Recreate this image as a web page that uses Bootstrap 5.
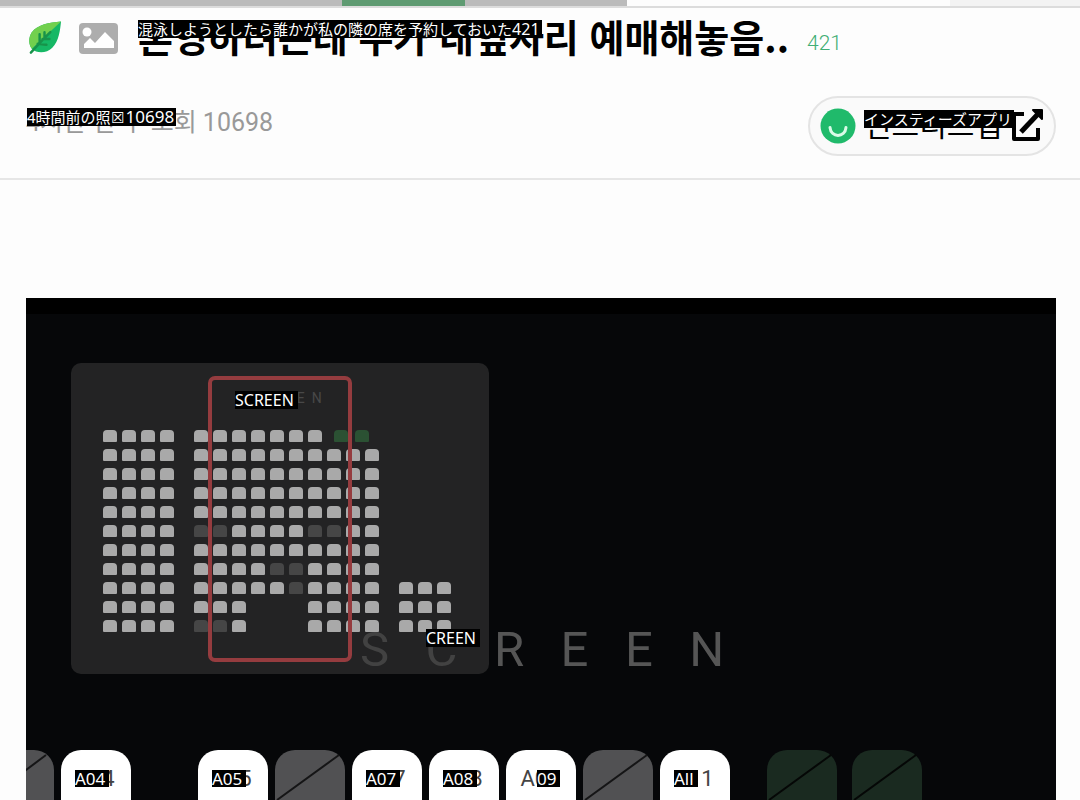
<!DOCTYPE html>
<html lang="ko">
<head>
<meta charset="utf-8">
<meta name="viewport" content="width=device-width, initial-scale=1">
<title>혼영하려는데 누가 내옆자리 예매해놓음..</title>
<link href="https://cdn.jsdelivr.net/npm/bootstrap@5.3.0/dist/css/bootstrap.min.css" rel="stylesheet">
<style>
  body { font-family: Roboto, "Noto Sans CJK KR", sans-serif; background: #fdfdfd; color: #000; }
  .page-x { padding-left: 26px; padding-right: 24px; }
  /* tab strip cut off by the top edge */
  .strip { height: 8px; border-bottom: 2px solid #dcdcdc; }
  .strip-grey { background: #bbb; }
  .strip-green { background: #5f9b72; }
  .strip-pale { background: #f3f3f3; }
  /* post heading */
  .post-head { border-bottom: 2px solid #e6e6e6; padding-bottom: 22px; }
  .title-row { height: 60px; margin-bottom: 28px; }
  .title-box { margin-left: 20px; }
  .post-title { font: bold 38px/44px "Noto Sans CJK KR", sans-serif; padding-bottom: 4px; }
  .reply-count { color: #3fae74; font-size: 21px; font-weight: 300; line-height: 28px; margin-left: 18px; padding-top: 10px; }
  .post-meta { color: #999; font-size: 25px; line-height: 32px; padding-bottom: 6px; }
  .app-btn { height: 60px; width: 248px; border: 2px solid #e4e4e4; background: #fafafa; padding: 0 10px; color: #000; }
  .app-btn:hover { background: #f2f2f2; }
  .app-name { font-size: 30px; line-height: 36px; margin-left: 8px; }
  /* translated captions laid over the original words */
  .caption { position: absolute; left: 0; background: #000; color: #fff; white-space: nowrap;
    font: 400 15px/18px "Noto Sans", "Noto Sans CJK JP", sans-serif; padding-right: 2px; }
  .caption-latin { font-size: 16px; padding-right: 4px; }
  .caption-title { top: 6px; }
  .caption-meta { top: 1px; left: 1px; }
  .caption-app { top: 2px; }
  .caption-num { font-size: 17px; }
  .caption-title .caption-num { font-size: 16px; }
  .caption-meta .caption-num { padding-left: 2px; }
  /* photo */
  .photo { background: #060709; border-top: 16px solid #000; margin-top: 118px; }
  .stage-word { position: absolute; left: 334px; top: 306px; margin: 0; font-size: 49px; line-height: 60px; font-weight: 400; color: #555; white-space: pre; }
  .mini-map { width: 418px; margin: 49px 0 0 45px; padding: 67px 32px 42px; border-radius: 10px; background: rgba(54,54,54,.61); }
  .mini-word { position: absolute; left: 164px; top: 24px; font-size: 14px; line-height: 22px; color: #484848; white-space: pre; }
  .caption-mini { left: 164px; top: 28px; }
  .caption-stage { left: 355px; top: 266px; }
  .viewport-frame { position: absolute; left: 137px; top: 13px; width: 144px; height: 286px; border: 4px solid #953c3f; border-radius: 7px; }
  .block { display: grid; gap: 7px 5px; grid-auto-rows: 12px; }
  .block-4 { grid-template-columns: repeat(4, 14px); }
  .block-10 { grid-template-columns: repeat(10, 14px); }
  .block-3 { grid-template-columns: repeat(3, 14px); }
  .block-gap { gap: 20px; }
  .dot { width: 14px; height: 12px; border-radius: 4px 4px 1px 1px; }
  .dot-free { background: #a9a9a9; }
  .dot-sold { background: #464646; }
  .dot-green { background: #2b5133; }
  .green-pair { grid-column: span 3; gap: 7px; padding-left: 7px; }
  .seat-row { margin-top: 76px; gap: 7px; height: 50px; }
  .seat { width: 70px; flex: none; height: 70px; border-radius: 20px; background: #fff; color: #444; font-size: 22px; line-height: 58px; padding-right: 2px; }
  .seat-sold { background: #515153; }
  .seat-green { background: #1a2a20; }
  .seat-cut { margin-left: -42px; }
  .aisle { margin-left: 60px; }
  .aisle-sm { margin-left: 30px; }
  .aisle-xs { margin-left: 8px; }
  .seat .caption { top: 20px; left: 14px; padding-right: 4px; font-size: 17px; line-height: 17px; }
  .seat .caption-mid { left: 31px; }
</style>
</head>
<body class="d-flex flex-column min-vh-100">
<div class="strip d-flex" aria-hidden="true">
  <div class="strip-grey" style="width:31.7%"></div>
  <div class="strip-green" style="width:11.4%"></div>
  <div class="strip-grey" style="width:15%"></div>
  <div class="strip-pale ms-auto" style="width:12%"></div>
</div>

<header class="post-head page-x">
  <div class="title-row d-flex align-items-center">
    <svg width="37" height="38" viewBox="0 0 38 38" aria-hidden="true">
      <path d="M36 2C24 3 12 5 6 13C2 19 3 26 6 30C11 35 21 35 27 29C34 22 35 11 36 2Z" fill="#16b865"/>
      <path d="M36 2C24 3 12 5 6 13C2 19 3 26 6 30L20 17Z" fill="#72d04e"/>
      <path d="M5 34L17 21L25 13M14 24V15M19 19V13M12 25L21 26M17 20H24" fill="none" stroke="#17934a" stroke-width="2.500" stroke-linecap="round"/>
    </svg>
    <svg class="ms-3" width="39" height="31" viewBox="0 0 39 31" aria-hidden="true">
      <rect width="39" height="31" rx="4" fill="#adadad"/>
      <circle cx="8" cy="9" r="4.5" fill="#fff"/>
      <path d="M5 25V21L11 15L16 20L26 9L35 18V25Z" fill="#fff"/>
    </svg>
    <div class="title-box position-relative">
      <h1 class="post-title m-0 text-nowrap">혼영하려는데 누가 내옆자리 예매해놓음..</h1>
      <span class="caption caption-title" lang="ja">混泳しようとしたら誰かが私の隣の席を予約しておいた<span class="caption-num">421</span></span>
    </div>
    <span class="reply-count">421</span>
  </div>
  <div class="d-flex justify-content-between align-items-center">
    <div class="position-relative">
      <div class="post-meta text-nowrap">4시간 전 ㅣ 조회 10698</div>
      <span class="caption caption-meta" lang="ja">4時間前の照☒<span class="caption-num">10698</span></span>
    </div>
    <button type="button" class="app-btn btn rounded-pill d-flex align-items-center">
      <svg class="flex-shrink-0" width="36" height="36" viewBox="0 0 36 36" aria-hidden="true">
        <circle cx="18" cy="18" r="17.5" fill="#20ba6b"/>
        <path d="M10 19.500C11 30 25 30 26 19.500" fill="none" stroke="#d9fbe7" stroke-width="3" stroke-linecap="round"/>
      </svg>
      <span class="app-name position-relative text-nowrap">인스티즈앱
        <span class="caption caption-app" lang="ja">インスティーズアプリ</span>
      </span>
      <svg class="ms-auto flex-shrink-0" width="34" height="34" viewBox="0 0 34 34" aria-hidden="true">
        <path d="M14 5H4V30H28V19" fill="none" stroke="#000" stroke-width="4" stroke-linejoin="round"/>
        <path d="M11 23L28 5" stroke="#000" stroke-width="5"/>
        <path d="M23 1H32V10Z" fill="#000" stroke="#000" stroke-width="2" stroke-linejoin="round"/>
      </svg>
    </button>
  </div>
</header>

<main class="page-x flex-grow-1 d-flex flex-column">
  <section class="photo position-relative overflow-hidden flex-grow-1">
    <h2 class="stage-word">S   C   R   E   E   N</h2>
    <div class="mini-map position-relative">
      <span class="mini-word">S  C  R  E  E  N</span>
      <div class="block-gap d-flex">
        <div class="block block-4" data-rows="1111/1111/1111/1111/1111/1111/1111/1111/1111/1111/1111"></div>
        <div class="block block-10" data-rows="1111111g/1111111111/1111111111/1111111111/1111111111/0011110011/1111111111/1111001111/1111101111/111...1111/001...1111"></div>
        <div class="block block-3" data-rows=".../.../.../.../.../.../.../.../111/111/111"></div>
      </div>
      <div class="viewport-frame"></div>
      <span class="caption caption-latin caption-mini">SCREEN</span>
      <span class="caption caption-latin caption-stage">CREEN</span>
    </div>
    <div class="seat-row d-flex">
      <div class="seat seat-sold seat-cut"><svg width="70" height="70"><path d="M2 50L62 5" stroke="#151516" stroke-width="2"/></svg></div>
      <div class="seat text-center position-relative">A04<span class="caption">A04</span></div>
      <div class="seat text-center position-relative aisle">A05<span class="caption">A05</span></div>
      <div class="seat seat-sold"><svg width="70" height="70"><path d="M2 50L64 5" stroke="#151516" stroke-width="2"/></svg></div>
      <div class="seat text-center position-relative">A07<span class="caption">A07</span></div>
      <div class="seat text-center position-relative">A08<span class="caption">A08</span></div>
      <div class="seat text-center position-relative">A09<span class="caption caption-mid">09</span></div>
      <div class="seat seat-sold"><svg width="70" height="70"><path d="M2 50L64 5" stroke="#151516" stroke-width="2"/></svg></div>
      <div class="seat text-center position-relative">A11<span class="caption">All</span></div>
      <div class="seat seat-green aisle-sm"><svg width="70" height="70"><path d="M2 50L64 5" stroke="#050706" stroke-width="2"/></svg></div>
      <div class="seat seat-green aisle-xs"><svg width="70" height="70"><path d="M2 50L64 5" stroke="#050706" stroke-width="2"/></svg></div>
    </div>
  </section>
</main>

<script src="https://cdn.jsdelivr.net/npm/bootstrap@5.3.0/dist/js/bootstrap.bundle.min.js"></script>
<script>
  // 1 = free seat, 0 = sold seat, g = pair of green seats, . = no seat
  const cell = {
    '1': '<i class="dot dot-free"></i>',
    '0': '<i class="dot dot-sold"></i>',
    '.': '<i></i>',
    'g': '<div class="green-pair d-flex"><i class="dot dot-green"></i><i class="dot dot-green"></i></div>'
  };
  document.querySelectorAll('[data-rows]').forEach(block => {
    block.innerHTML = [...block.dataset.rows.replaceAll('/', '')].map(c => cell[c]).join('');
  });
</script>
</body>
</html>
